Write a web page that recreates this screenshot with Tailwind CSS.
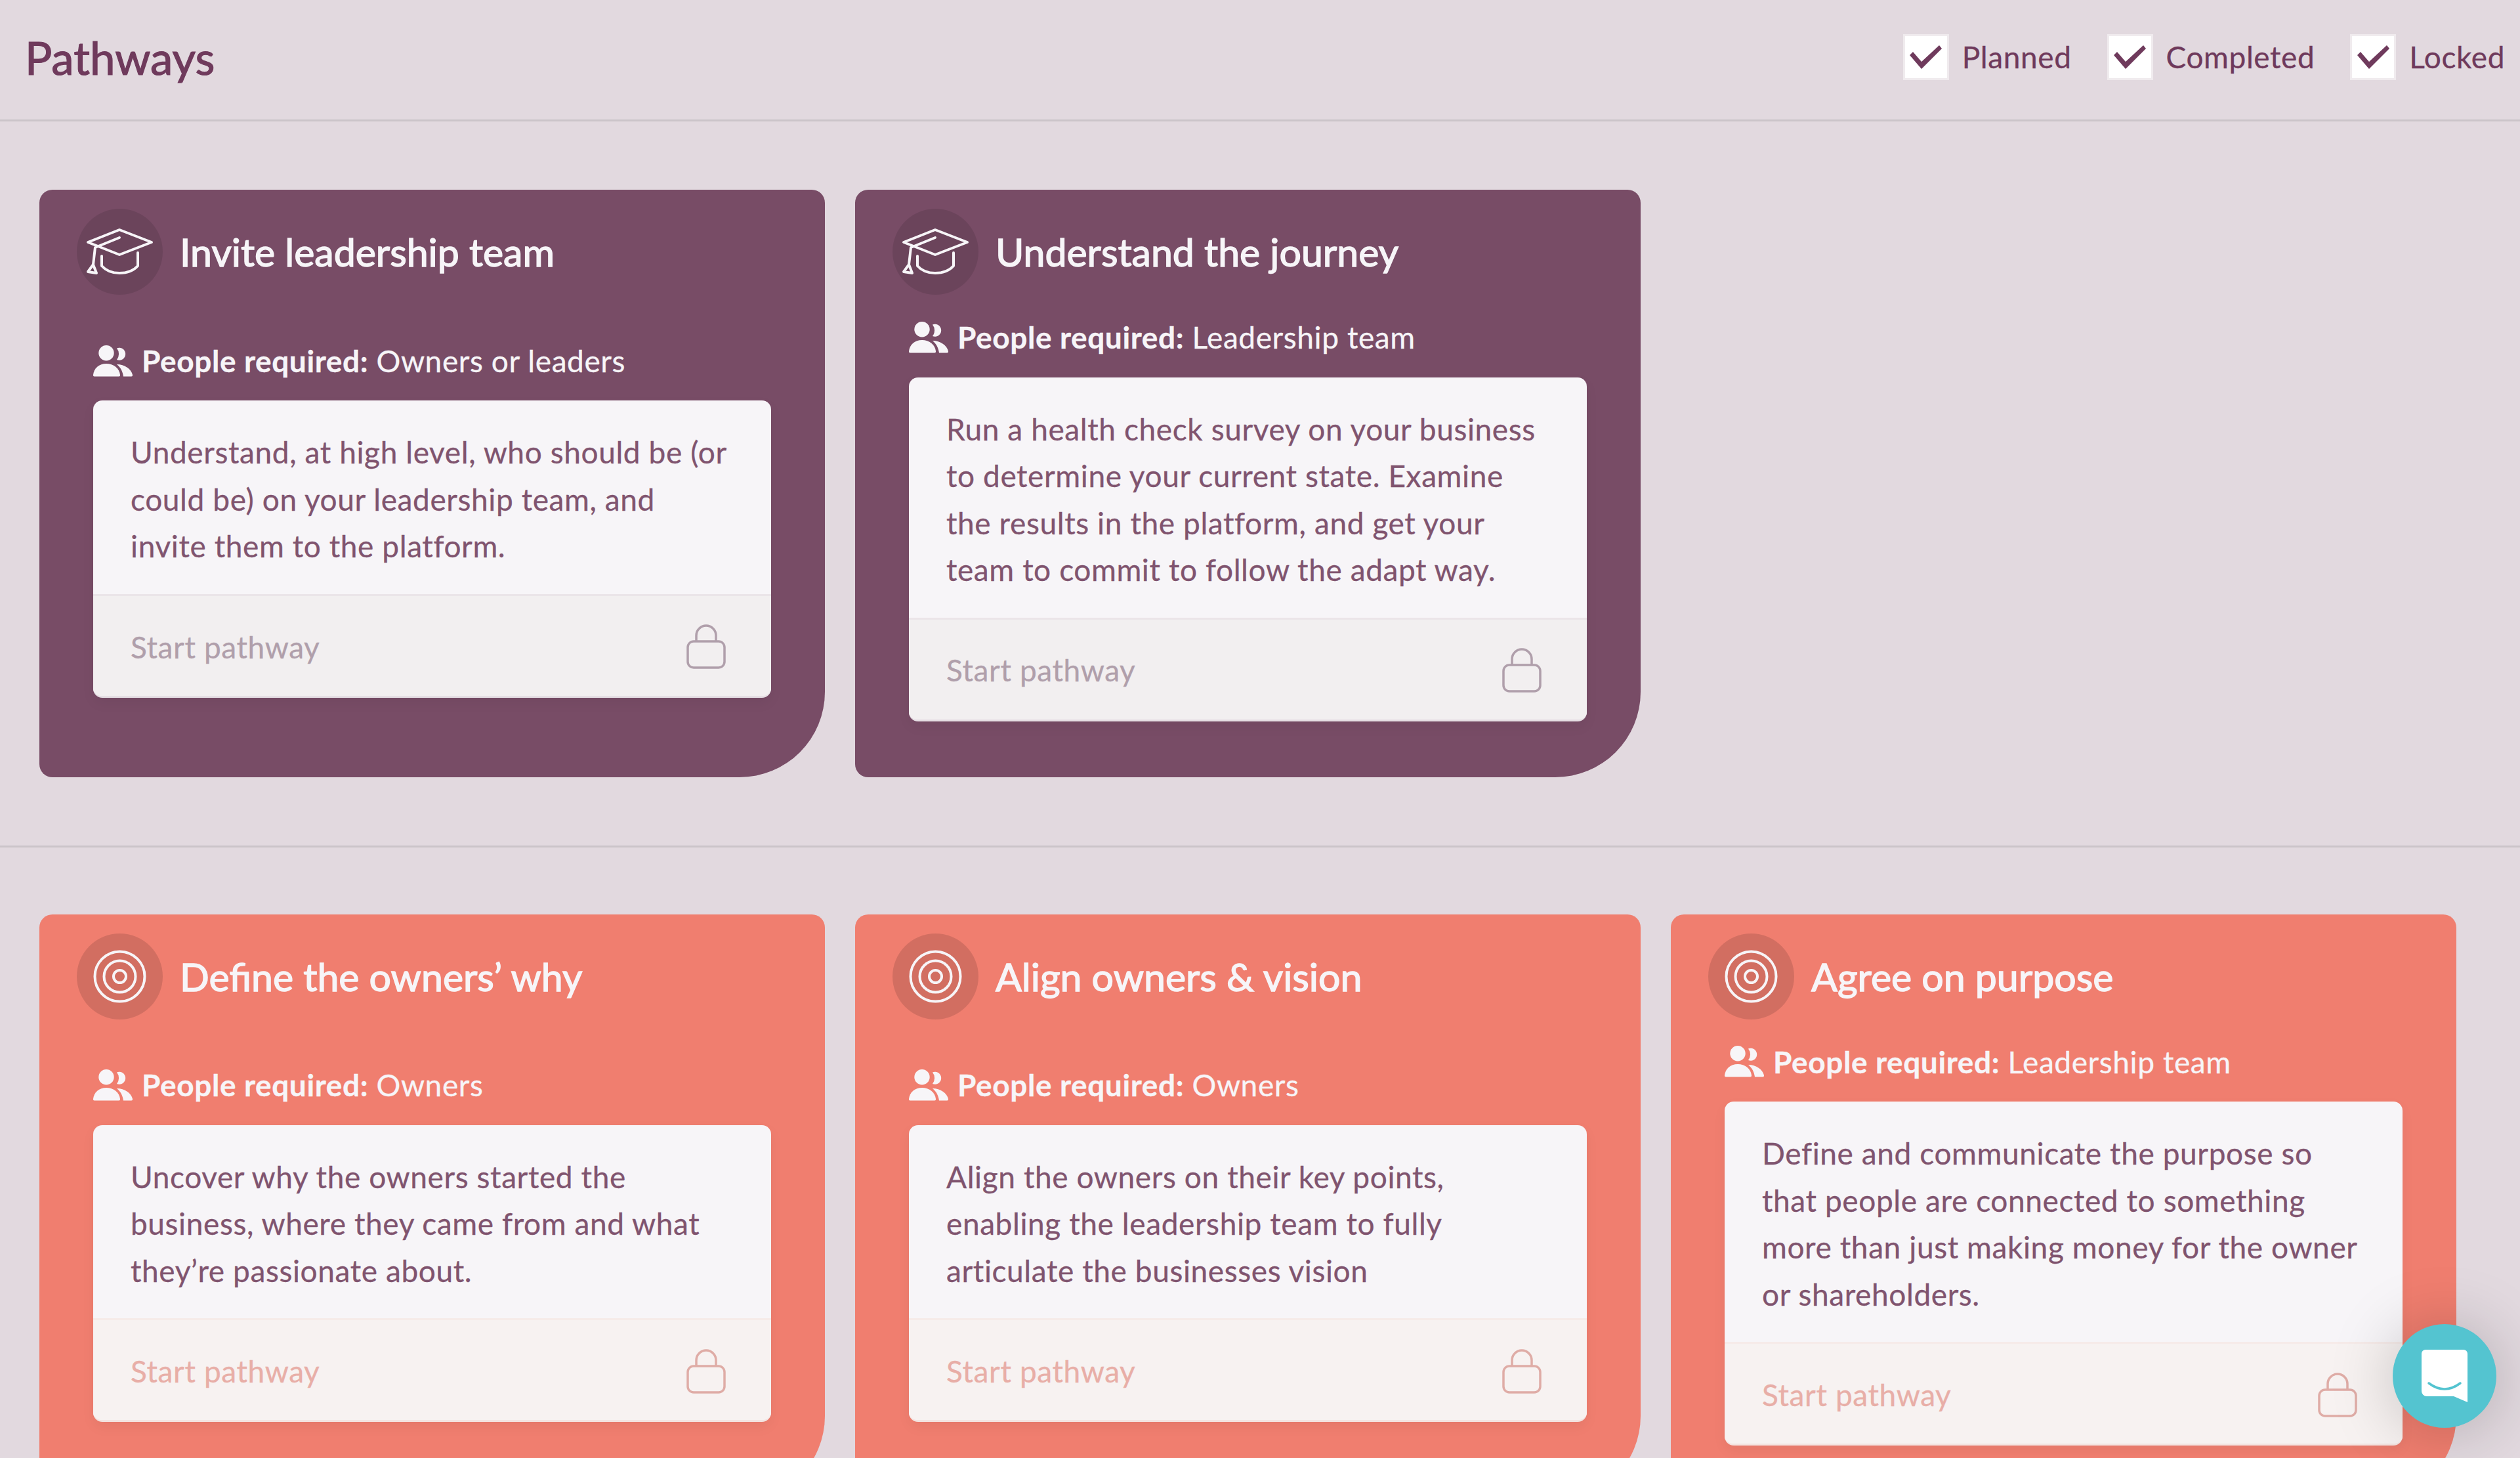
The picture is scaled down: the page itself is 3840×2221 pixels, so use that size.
<!DOCTYPE html>
<html lang="en">
<head>
    <meta charset="UTF-8">
    <meta name="viewport" content="width=device-width, initial-scale=1.0">
    <title>Pathways</title>
    <script src="https://cdn.jsdelivr.net/npm/@tailwindcss/browser@4"></script>
</head>
<body class="h-screen overflow-hidden bg-[#e2d9df] font-['Lato',sans-serif] text-[46px] leading-[71.5px] tracking-[0.6px] text-[#80546f] [-webkit-text-stroke:0.3px]">
    <!-- shared icons -->
    <svg class="hidden">
        <symbol id="cap" viewBox="0 0 131 131">
            <g fill="none" stroke="#f7f5f8" stroke-width="4" stroke-linejoin="round" stroke-linecap="round">
                <path d="M17 51 65 32 114 51 65 70Z"/>
                <path d="M65 44 28 59 25 85"/>
                <path d="M25 85 17 96 30 98Z"/>
                <path d="M38 72V87C45 95 55 98 65 98S86 95 93 87V67"/>
            </g>
        </symbol>
        <symbol id="target" viewBox="0 0 131 131">
            <g fill="none" stroke="#f7f5f8" stroke-width="4">
                <circle cx="65.5" cy="65.5" r="38"/>
                <circle cx="65.5" cy="65.5" r="24"/>
                <circle cx="65.5" cy="65.5" r="9.5"/>
            </g>
        </symbol>
        <symbol id="people" viewBox="0 0 60 48">
            <g fill="#f7f5f8">
                <circle cx="20" cy="11.7" r="11.7"/>
                <path d="M36 4.5a9.5 9.5 0 1 1 0 17.5a14 14 0 0 0 0-17.5Z"/>
                <path d="M2 47.5C0 47.5 0 46 0 45 1 35 9 28 20 28S40 35 41 45C41 46 41 47.5 39 47.5Z"/>
                <path d="M36 29C48 29 58 36 60 45 60 46 60 47.5 58 47.5H46C45 40 42 34 36 29Z"/>
            </g>
        </symbol>
        <symbol id="lock" viewBox="0 0 60 68">
            <g fill="none" stroke="currentColor" stroke-width="3.5">
                <rect x="2" y="26" width="56" height="40" rx="9"/>
                <path d="M15 26V17a15 15 0 0 1 30 0V26"/>
            </g>
        </symbol>
        <symbol id="check" viewBox="0 0 49 36">
            <polygon fill="#6f3a5c" points="0 15 5 10 18 25 45 0 49 5 18 36"/>
        </symbol>
    </svg>

    <!-- Header -->
    <header class="flex h-[185px] items-center justify-between border-b-[3px] border-[#cbc4c9] pb-[8px] pl-[38px] pr-[23px] text-[#6f3a5c]">
        <h1 class="text-[69px] leading-none tracking-normal [-webkit-text-stroke:1.2px]">Pathways</h1>
        <div class="flex items-center gap-[54px]">
            <label class="flex items-center gap-[20px]">
                <span class="flex h-[70px] w-[70px] items-center justify-center border-[3px] border-[#f0ebee] bg-white">
                    <svg class="h-[36px] w-[49px]"><use href="#check"/></svg>
                </span>
                Planned
            </label>
            <label class="flex items-center gap-[20px]">
                <span class="flex h-[70px] w-[70px] items-center justify-center border-[3px] border-[#f0ebee] bg-white">
                    <svg class="h-[36px] w-[49px]"><use href="#check"/></svg>
                </span>
                Completed
            </label>
            <label class="flex items-center gap-[20px]">
                <span class="flex h-[70px] w-[70px] items-center justify-center border-[3px] border-[#f0ebee] bg-white">
                    <svg class="h-[36px] w-[49px]"><use href="#check"/></svg>
                </span>
                Locked
            </label>
        </div>
    </header>

    <!-- Leadership row -->
    <section class="grid grid-cols-[repeat(3,1197px)] gap-[46px] border-b-[3px] border-[#cbc4c9] py-[104px] pl-[60px]">
        <article class="flex flex-col rounded-t-[20px] rounded-bl-[20px] rounded-br-[130px] bg-[#784c66]">
            <div class="flex items-center gap-[26px] pl-[57px] pt-[29px]">
                <span class="h-[131px] w-[131px] rounded-full bg-black/10"><svg class="h-full w-full"><use href="#cap"/></svg></span>
                <h2 class="text-[59px] leading-none tracking-normal text-[#f7f5f8] [-webkit-text-stroke:1.4px]">Invite leadership team</h2>
            </div>
            <div class="flex flex-1 flex-col justify-center px-[82px] pb-[85px] pt-[29px]">
                <p class="mb-[25px] flex items-center gap-[14px] text-[#f7f5f8]"><svg class="h-[48px] w-[60px]"><use href="#people"/></svg><span><b class="font-bold">People required:</b> Owners or leaders</span></p>
                <div class="overflow-hidden rounded-[14px] border-b-[3px] border-[#e6dfe4] bg-[#f7f5f8] shadow-[0_8px_20px_rgba(0,0,0,0.05)]">
                    <p class="px-[57px] pb-[37px] pt-[43px]">Understand, at high level, who should be (or could be) on your leadership team, and invite them to the platform.</p>
                    <div class="flex h-[155px] items-center justify-between border-t-[3px] border-[#ebe5e9] bg-[#f2eff0] pl-[57px] pr-[69px] pt-[3px] text-[#b09fab]">
                        Start pathway
                        <svg class="h-[68px] w-[60px]"><use href="#lock"/></svg>
                    </div>
                </div>
            </div>
        </article>
        <article class="flex flex-col rounded-t-[20px] rounded-bl-[20px] rounded-br-[130px] bg-[#784c66]">
            <div class="flex items-center gap-[26px] pl-[57px] pt-[29px]">
                <span class="h-[131px] w-[131px] rounded-full bg-black/10"><svg class="h-full w-full"><use href="#cap"/></svg></span>
                <h2 class="text-[59px] leading-none tracking-normal text-[#f7f5f8] [-webkit-text-stroke:1.4px]">Understand the journey</h2>
            </div>
            <div class="flex flex-1 flex-col justify-center px-[82px] pb-[85px] pt-[29px]">
                <p class="mb-[25px] flex items-center gap-[14px] text-[#f7f5f8]"><svg class="h-[48px] w-[60px]"><use href="#people"/></svg><span><b class="font-bold">People required:</b> Leadership team</span></p>
                <div class="overflow-hidden rounded-[14px] border-b-[3px] border-[#e6dfe4] bg-[#f7f5f8] shadow-[0_8px_20px_rgba(0,0,0,0.05)]">
                    <p class="px-[57px] pb-[37px] pt-[43px]">Run a health check survey on your business to determine your current state. Examine the results in the platform, and get your team to commit to follow the adapt way.</p>
                    <div class="flex h-[155px] items-center justify-between border-t-[3px] border-[#ebe5e9] bg-[#f2eff0] pl-[57px] pr-[69px] pt-[3px] text-[#b09fab]">
                        Start pathway
                        <svg class="h-[68px] w-[60px]"><use href="#lock"/></svg>
                    </div>
                </div>
            </div>
        </article>
    </section>

    <!-- Owners row -->
    <section class="grid grid-cols-[repeat(3,1197px)] gap-[46px] py-[102px] pl-[60px]">
        <article class="flex flex-col rounded-t-[20px] rounded-bl-[20px] rounded-br-[130px] bg-[#f07e6f]">
            <div class="flex items-center gap-[26px] pl-[57px] pt-[29px]">
                <span class="h-[131px] w-[131px] rounded-full bg-black/12"><svg class="h-full w-full"><use href="#target"/></svg></span>
                <h2 class="text-[59px] leading-none tracking-normal text-[#f7f5f8] [-webkit-text-stroke:1.4px]">Define the owners’ why</h2>
            </div>
            <div class="flex flex-1 flex-col justify-center px-[82px] pb-[85px] pt-[29px]">
                <p class="mb-[25px] flex items-center gap-[14px] text-[#f7f5f8]"><svg class="h-[48px] w-[60px]"><use href="#people"/></svg><span><b class="font-bold">People required:</b> Owners</span></p>
                <div class="overflow-hidden rounded-[14px] border-b-[3px] border-[#f3e4e1] bg-[#f7f5f8] shadow-[0_8px_20px_rgba(0,0,0,0.05)]">
                    <p class="px-[57px] pb-[37px] pt-[43px]">Uncover why the owners started the business, where they came from and what they’re passionate about.</p>
                    <div class="flex h-[155px] items-center justify-between border-t-[3px] border-[#f6ebe9] bg-[#f7f2f1] pl-[57px] pr-[69px] pt-[3px] text-[#e8aea7]">
                        Start pathway
                        <svg class="h-[68px] w-[60px] text-[#dfaca6]"><use href="#lock"/></svg>
                    </div>
                </div>
            </div>
        </article>
        <article class="flex flex-col rounded-t-[20px] rounded-bl-[20px] rounded-br-[130px] bg-[#f07e6f]">
            <div class="flex items-center gap-[26px] pl-[57px] pt-[29px]">
                <span class="h-[131px] w-[131px] rounded-full bg-black/12"><svg class="h-full w-full"><use href="#target"/></svg></span>
                <h2 class="text-[59px] leading-none tracking-normal text-[#f7f5f8] [-webkit-text-stroke:1.4px]">Align owners &amp; vision</h2>
            </div>
            <div class="flex flex-1 flex-col justify-center px-[82px] pb-[85px] pt-[29px]">
                <p class="mb-[25px] flex items-center gap-[14px] text-[#f7f5f8]"><svg class="h-[48px] w-[60px]"><use href="#people"/></svg><span><b class="font-bold">People required:</b> Owners</span></p>
                <div class="overflow-hidden rounded-[14px] border-b-[3px] border-[#f3e4e1] bg-[#f7f5f8] shadow-[0_8px_20px_rgba(0,0,0,0.05)]">
                    <p class="px-[57px] pb-[37px] pt-[43px]">Align the owners on their key points, enabling the leadership team to fully articulate the businesses vision</p>
                    <div class="flex h-[155px] items-center justify-between border-t-[3px] border-[#f6ebe9] bg-[#f7f2f1] pl-[57px] pr-[69px] pt-[3px] text-[#e8aea7]">
                        Start pathway
                        <svg class="h-[68px] w-[60px] text-[#dfaca6]"><use href="#lock"/></svg>
                    </div>
                </div>
            </div>
        </article>
        <article class="flex flex-col rounded-t-[20px] rounded-bl-[20px] rounded-br-[130px] bg-[#f07e6f]">
            <div class="flex items-center gap-[26px] pl-[57px] pt-[29px]">
                <span class="h-[131px] w-[131px] rounded-full bg-black/12"><svg class="h-full w-full"><use href="#target"/></svg></span>
                <h2 class="text-[59px] leading-none tracking-normal text-[#f7f5f8] [-webkit-text-stroke:1.4px]">Agree on purpose</h2>
            </div>
            <div class="flex flex-1 flex-col justify-center px-[82px] pb-[85px] pt-[29px]">
                <p class="mb-[25px] flex items-center gap-[14px] text-[#f7f5f8]"><svg class="h-[48px] w-[60px]"><use href="#people"/></svg><span><b class="font-bold">People required:</b> Leadership team</span></p>
                <div class="overflow-hidden rounded-[14px] border-b-[3px] border-[#f3e4e1] bg-[#f7f5f8] shadow-[0_8px_20px_rgba(0,0,0,0.05)]">
                    <p class="px-[57px] pb-[37px] pt-[43px]">Define and communicate the purpose so that people are connected to something more than just making money for the owner or shareholders.</p>
                    <div class="flex h-[155px] items-center justify-between border-t-[3px] border-[#f6ebe9] bg-[#f7f2f1] pl-[57px] pr-[69px] pt-[3px] text-[#e8aea7]">
                        Start pathway
                        <svg class="h-[68px] w-[60px] text-[#dfaca6]"><use href="#lock"/></svg>
                    </div>
                </div>
            </div>
        </article>
    </section>

    <!-- Chat launcher -->
    <div class="fixed bottom-[46px] right-[36px] flex h-[158px] w-[158px] items-center justify-center rounded-full bg-[#54c4d0] shadow-[0_4px_100px_rgba(0,0,0,0.22)]">
        <svg class="h-[80px] w-[70px]" viewBox="0 0 70 80">
            <path fill="#fff" d="M6 0H64a6 6 0 0 1 6 6V80L49 71H8a8 8 0 0 1-8-8V6a6 6 0 0 1 6-6Z"/>
            <path fill="none" stroke="#54c4d0" stroke-width="3.5" stroke-linecap="round" d="M11 51Q35 69 59 51"/>
        </svg>
    </div>
</body>
</html>
